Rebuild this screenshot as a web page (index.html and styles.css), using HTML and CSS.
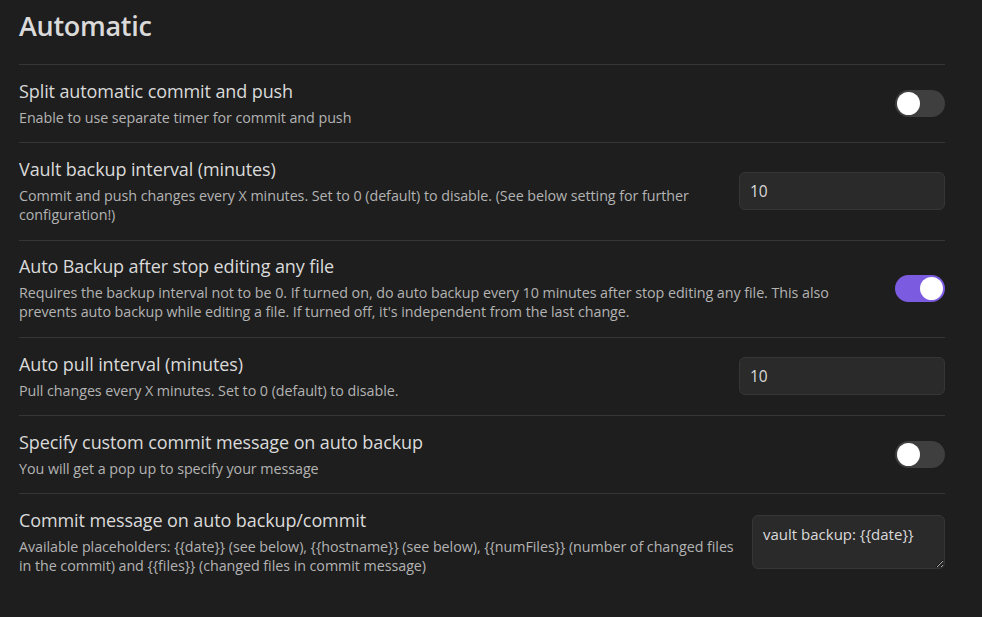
FILE: index.html
```html
<!DOCTYPE html>
<html>
<head>
<meta charset="utf-8">
<link rel="stylesheet" href="styles.css">
</head>
<body>
<div class="settings">
  <h2 class="heading">Automatic</h2>

  <div class="item">
    <div class="info">
      <div class="name">Split automatic commit and push</div>
      <div class="desc">Enable to use separate timer for commit and push</div>
    </div>
    <div class="control">
      <div class="toggle"><span class="knob"></span></div>
    </div>
  </div>

  <div class="item">
    <div class="info">
      <div class="name">Vault backup interval (minutes)</div>
      <div class="desc">Commit and push changes every X minutes. Set to 0 (default) to disable. (See below setting for further configuration!)</div>
    </div>
    <div class="control">
      <input class="text" type="text" value="10">
    </div>
  </div>

  <div class="item">
    <div class="info">
      <div class="name">Auto Backup after stop editing any file</div>
      <div class="desc">Requires the backup interval not to be 0. If turned on, do auto backup every 10 minutes after stop editing any file. This also prevents auto backup while editing a file. If turned off, it's independent from the last change.</div>
    </div>
    <div class="control">
      <div class="toggle on"><span class="knob"></span></div>
    </div>
  </div>

  <div class="item">
    <div class="info">
      <div class="name">Auto pull interval (minutes)</div>
      <div class="desc">Pull changes every X minutes. Set to 0 (default) to disable.</div>
    </div>
    <div class="control">
      <input class="text" type="text" value="10">
    </div>
  </div>

  <div class="item">
    <div class="info">
      <div class="name">Specify custom commit message on auto backup</div>
      <div class="desc">You will get a pop up to specify your message</div>
    </div>
    <div class="control">
      <div class="toggle"><span class="knob"></span></div>
    </div>
  </div>

  <div class="item last">
    <div class="info">
      <div class="name">Commit message on auto backup/commit</div>
      <div class="desc">Available placeholders: {{date}} (see below), {{hostname}} (see below), {{numFiles}} (number of changed files in the commit) and {{files}} (changed files in commit message)</div>
    </div>
    <div class="control">
      <textarea class="area">vault backup: {{date}}</textarea>
    </div>
  </div>
</div>
</body>
</html>
```

FILE: styles.css
```css
html, body {
  margin: 0;
  padding: 0;
  background: #1e1e1e;
  height: 100%;
  overflow: hidden;
}

body {
  font-family: "Open Sans", "Noto Sans", sans-serif;
  color: #dadada;
}

.settings {
  padding: 0 37px 0 19px;
}

.heading {
  margin: 0;
  height: 64px;
  padding-top: 10px;
  box-sizing: border-box;
  font-size: 27px;
  line-height: 32px;
  font-weight: 600;
  color: #dadada;
  letter-spacing: -0.3px;
}

.item {
  display: flex;
  align-items: center;
  border-top: 1px solid #363636;
  padding: 14.5px 0 15.5px;
}

.info {
  flex: 1 1 auto;
  margin-right: 16px;
}

.name {
  font-size: 18px;
  line-height: 22px;
  color: #dadada;
  letter-spacing: -0.1px;
}

.desc {
  font-size: 14.3px;
  line-height: 19.2px;
  color: #b3b3b3;
  padding-top: 6px;
  letter-spacing: -0.05px;
}

.control {
  flex: 0 0 auto;
  display: flex;
  justify-content: flex-end;
  align-items: center;
}

.toggle {
  width: 50px;
  height: 27px;
  border-radius: 14px;
  background: #3f3f3f;
  position: relative;
  box-sizing: border-box;
}

.toggle .knob {
  position: absolute;
  top: 2px;
  left: 2px;
  width: 23px;
  height: 23px;
  border-radius: 50%;
  background: #ffffff;
}

.toggle.on {
  background: #7b5ce1;
}

.toggle.on .knob {
  left: 25px;
}

.text {
  width: 206px;
  height: 38px;
  box-sizing: border-box;
  background: #2a2a2a;
  border: 1px solid #363636;
  border-radius: 6px;
  color: #dadada;
  font-family: "Open Sans", "Noto Sans", sans-serif;
  font-size: 15.5px;
  padding: 0 10px;
  outline: none;
}

.area {
  width: 193px;
  height: 54px;
  box-sizing: border-box;
  background: #2a2a2a;
  border: 1px solid #363636;
  border-radius: 6px;
  color: #dadada;
  font-family: "Open Sans", "Noto Sans", sans-serif;
  font-size: 15px;
  line-height: 20px;
  padding: 8px 10px 6px;
  outline: none;
  resize: both;
}
```
